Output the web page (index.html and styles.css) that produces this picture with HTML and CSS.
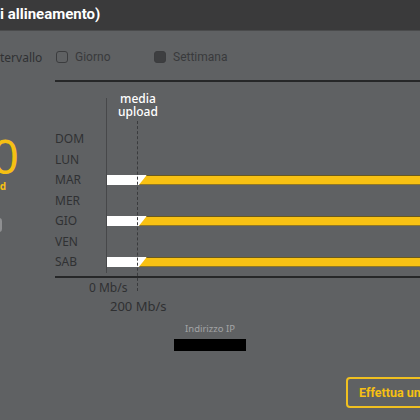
FILE: index.html
```
<!DOCTYPE html>
<html>
  <head>
    <meta charset="UTF-8">
    <title>Test di allineamento</title>
    <link rel="stylesheet" href="styles.css">
  </head>
  <body>
    <header class="top">
      <h1 class="title">i allineamento)</h1>
    </header>

    <section class="panel">
      <div class="filters">
        <span class="f-label">tervallo</span>
        <label class="opt"><span class="box"></span>Giorno</label>
        <label class="opt"><span class="box checked"></span>Settimana</label>
      </div>
      <div class="rule"></div>

      <div class="chart-wrap">
        <div class="summary">
          <div class="summary-in">
            <div class="big">0</div>
            <div class="unit">upload</div>
            <div class="chip"></div>
          </div>
        </div>

        <div class="chart">
          <ul class="days">
            <li>DOM</li>
            <li>LUN</li>
            <li>MAR</li>
            <li>MER</li>
            <li>GIO</li>
            <li>VEN</li>
            <li>SAB</li>
          </ul>
          <div class="plot">
            <div class="avg-label">media<br>upload</div>
            <div class="avg-line"></div>
            <div class="row"></div>
            <div class="row"></div>
            <div class="row"><div class="bar"><div class="fill"></div></div></div>
            <div class="row"></div>
            <div class="row"><div class="bar"><div class="fill"></div></div></div>
            <div class="row"></div>
            <div class="row"><div class="bar"><div class="fill"></div></div></div>
          </div>
        </div>
      </div>

      <div class="tick t0">0 Mb/s</div>
      <div class="tick t200">200 Mb/s</div>

      <div class="ip">
        <div class="ip-label">Indirizzo IP</div>
        <div class="ip-value"></div>
      </div>

      <div class="actions">
        <button class="btn">Effettua una nuova misura</button>
      </div>
    </section>
  </body>
</html>
```

FILE: styles.css
```
body{
  margin:0;
  width:420px;
  height:420px;
  overflow:hidden;
  background-color:#5f6163;
  font-family:"Noto Sans", "Open Sans", sans-serif;
}
.top{
  height:30px;
  background-color:#3a3a3b;
  border-bottom:1px solid #4a4b4c;
  display:flex;
  align-items:center;
}
.title{
  margin:0;
  color:#ffffff;
  font-family:Roboto, "Noto Sans", sans-serif;
  font-size:15px;
  font-weight:700;
  line-height:1;
  margin-top:-2px;
}

.filters{
  display:flex;
  align-items:center;
  height:22px;
  margin-top:15px;
  font-size:12px;
  color:#303133;
}
.f-label{
  width:56px;
}
.opt{
  display:flex;
  align-items:center;
  gap:7px;
  width:98px;
  color:#393a3c;
  font-family:Roboto, "Noto Sans", sans-serif;
}
.box{
  box-sizing:border-box;
  width:12px;
  height:12px;
  border:1.5px solid #3b3c3e;
  border-radius:3px;
}
.box.checked{
  background-color:#3d3e40;
}
.rule{
  margin:12px 0 0 55px;
  height:2px;
  background-color:#262728;
}

.chart-wrap{
  display:flex;
}
.summary{
  width:55px;
  flex:none;
}
.summary-in{
  margin-left:-64px;
  width:83px;
  text-align:right;
  padding-top:46px;
}
.big{
  color:#f6c013;
  font-size:48px;
  line-height:56px;
}
.unit{
  color:#f6c013;
  font-size:10px;
  font-weight:700;
  line-height:12px;
  margin-right:13px;
  margin-top:-4px;
}
.chip{
  margin:26px 0 0 56px;
  width:10px;
  height:14px;
  border-radius:3px;
  background-color:#8e8f91;
}

.chart{
  flex:1;
  display:grid;
  grid-template-columns:51px 1fr;
  margin-top:16px;
  border-bottom:2px solid #262728;
  padding-bottom:3px;
}
.days{
  list-style:none;
  margin:0;
  padding:31px 0 0 0;
  font-size:12px;
  color:#303133;
}
.days li{
  height:20.5px;
  line-height:20.5px;
}
.plot{
  position:relative;
  border-left:1px solid #47484a;
  padding-top:31px;
}
.avg-label{
  position:absolute;
  top:-6px;
  left:1px;
  width:60px;
  text-align:center;
  color:#ffffff;
  font-size:12px;
  font-weight:500;
  line-height:13px;
}
.avg-line{
  position:absolute;
  left:30px;
  top:23px;
  bottom:-18px;
  border-left:1px dashed #3a3b3d;
  z-index:2;
}
.row{
  height:20.5px;
  display:flex;
  align-items:center;
}
.bar{
  flex:1;
  height:10px;
  background-color:#ffffff;
  display:flex;
  margin-top:-1px;
}
.fill{
  flex:1;
  margin-left:32px;
  background-color:#f8c113;
  border-top:1px solid #6b5a1c;
  border-bottom:1px solid #6b5a1c;
  clip-path:polygon(8px 0, 100% 0, 100% 100%, 0 100%);
}

.tick{
  font-size:12px;
  color:#2f3032;
  line-height:16px;
}
.t0{
  padding:2px 0 0 89px;
}
.t200{
  padding:2px 0 0 110px;
  font-size:13px;
}

.ip{
  text-align:center;
  margin-top:9px;
}
.ip-label{
  font-size:9.5px;
  color:#a3a4a6;
  line-height:12px;
}
.ip-value{
  display:inline-block;
  width:72px;
  height:12px;
  background-color:#000000;
  margin-top:4px;
  vertical-align:top;
}

.actions{
  padding:20px 0 0 346px;
  white-space:nowrap;
}
.btn{
  height:31px;
  padding:0 11px;
  background:none;
  border:2px solid #f0c020;
  border-radius:4px;
  color:#f6c013;
  font-family:Roboto, "Noto Sans", sans-serif;
  font-size:12.5px;
  font-weight:700;
  white-space:nowrap;
}
```
